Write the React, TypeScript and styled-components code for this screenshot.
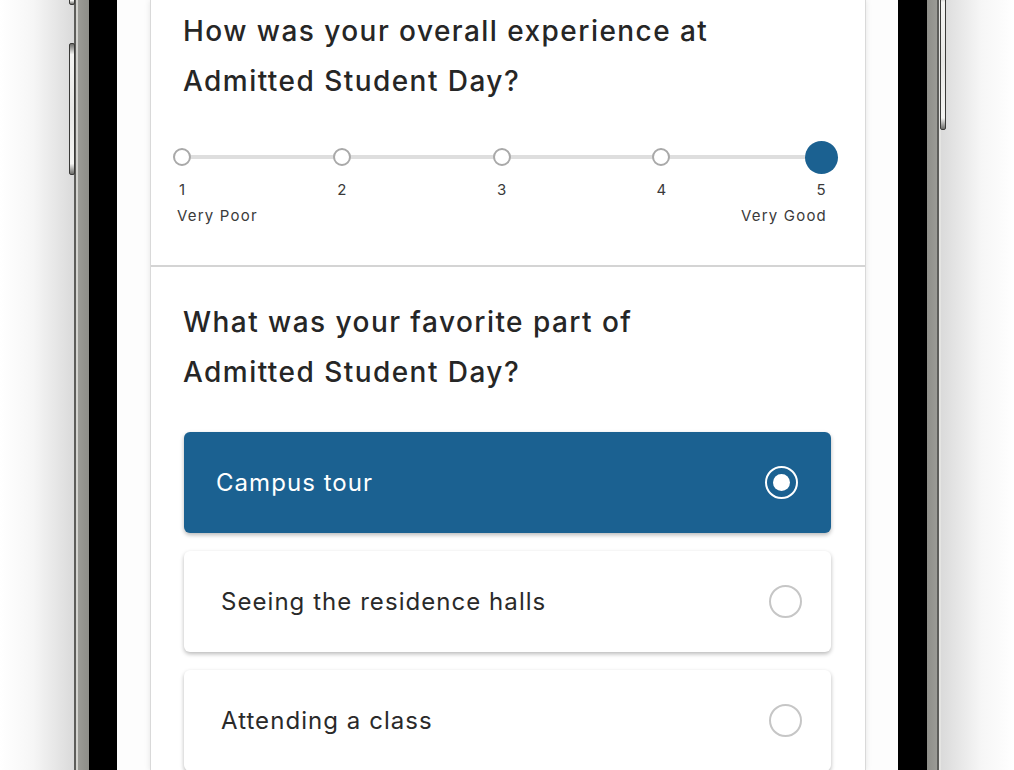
import React, { useState } from 'react';
import styled, { createGlobalStyle } from 'styled-components';

const GlobalStyle = createGlobalStyle`
  html, body {
    margin: 0;
    padding: 0;
    background: #fff;
  }
  body {
    font-family: Inter, 'Open Sans', sans-serif;
    overflow: hidden;
  }
`;

type TSide = {
  side: 'left' | 'right';
};

type TSelected = {
  selected: boolean;
};

type TStop = {
  active: boolean;
};

const BLUE = '#1b6191';

const Page = styled.div`
  display: flex;
  width: 1014px;
  height: 770px;
  overflow: hidden;
`;

const Shade = styled.div<TSide>`
  position: relative;
  width: ${props => (props.side === 'left' ? '74px' : 'auto')};
  flex: ${props => (props.side === 'left' ? '0 0 74px' : '1')};
  background: ${props =>
    props.side === 'left'
      ? 'linear-gradient(to right, #ffffff 0%, #f6f6f6 45%, #dadada 100%)'
      : 'linear-gradient(to left, #ffffff 0%, #f6f6f6 45%, #dadada 100%)'};
`;

const Rail = styled.div<TSide>`
  width: ${props => (props.side === 'left' ? '15px' : '14px')};
  background: ${props =>
    props.side === 'left'
      ? 'linear-gradient(to right, #5d5d5a 0, #5d5d5a 2px, #d2d2ce 2px, #d2d2ce 4px, #9b9b96 4px, #8e8e89 15px)'
      : 'linear-gradient(to left, #e4e4e2 0, #e4e4e2 2px, #5d5d5a 2px, #5d5d5a 4px, #9b9b96 4px, #8e8e89 14px)'};
`;

const Bezel = styled.div<TSide>`
  width: ${props => (props.side === 'left' ? '28px' : '29px')};
  background: #000;
`;

const SideButton = styled.div<{ top: number; height: number; side: 'left' | 'right' }>`
  position: absolute;
  top: ${props => props.top}px;
  ${props => (props.side === 'left' ? 'right: -1px;' : 'left: -1px;')}
  width: 6px;
  height: ${props => props.height}px;
  box-sizing: border-box;
  border: 1px solid #3a3a38;
  border-radius: 2px;
  background: linear-gradient(
    to bottom,
    #6b6b68 0%,
    #f4f4f2 8%,
    #e8e8e6 50%,
    #f4f4f2 92%,
    #6b6b68 100%
  );
`;

const Screen = styled.div`
  width: 781px;
  flex: 0 0 781px;
  box-sizing: border-box;
  padding: 0 32px 0 33px;
  background: #fdfdfd;
`;

const Card = styled.div`
  background: #fff;
  border-left: 1px solid #d9d9d9;
  border-right: 1px solid #d9d9d9;
  box-shadow: 0 0 6px rgba(0, 0, 0, 0.1);
  min-height: 770px;
`;

const Section = styled.section<{ divided?: boolean }>`
  padding: ${props => (props.divided ? '30px 33px 0 32px' : '6px 33px 39px 32px')};
  ${props => props.divided && 'border-top: 2px solid #d4d4d4;'}
`;

const Question = styled.h2`
  margin: 0;
  font-family: Inter, 'Open Sans', sans-serif;
  font-weight: 500;
  font-size: 28px;
  line-height: 50px;
  color: #262626;
  letter-spacing: 1.45px;
`;

const Track = styled.div`
  position: relative;
  display: flex;
  justify-content: space-between;
  margin: 35px 11px 0 -1px;
  &::before {
    content: '';
    position: absolute;
    left: 0;
    right: 0;
    top: 14px;
    height: 4px;
    background: #dedede;
  }
`;

const Stop = styled.div`
  position: relative;
  width: 0;
  display: flex;
  flex-direction: column;
  align-items: center;
`;

const KnobBox = styled.div`
  height: 32px;
  display: flex;
  align-items: center;
  justify-content: center;
`;

const Knob = styled.button<TStop>`
  box-sizing: border-box;
  flex: none;
  padding: 0;
  border-radius: 50%;
  cursor: pointer;
  width: ${props => (props.active ? '33px' : '18px')};
  height: ${props => (props.active ? '33px' : '18px')};
  border: ${props => (props.active ? 'none' : '2px solid #a9a9a9')};
  background: ${props => (props.active ? BLUE : '#fff')};
`;

const StopNumber = styled.span`
  margin-top: 8px;
  font-size: 15px;
  line-height: 18px;
  color: #3a3a3a;
`;

const Ends = styled.div`
  display: flex;
  justify-content: space-between;
  margin: 7px 5px 0 -6px;
  font-size: 15px;
  line-height: 20px;
  letter-spacing: 1.2px;
  color: #3a3a3a;
`;

const Options = styled.div`
  display: flex;
  flex-direction: column;
  gap: 18px;
  margin-top: 35px;
`;

const Option = styled.button<TSelected>`
  display: flex;
  align-items: center;
  justify-content: space-between;
  height: 101px;
  box-sizing: border-box;
  margin: 0 1px;
  padding: ${props => (props.selected ? '0 33px 0 32px' : '0 29px 0 37px')};
  border: none;
  border-radius: 6px;
  cursor: pointer;
  text-align: left;
  font-family: Inter, 'Open Sans', sans-serif;
  font-size: 24px;
  letter-spacing: 1.05px;
  color: ${props => (props.selected ? '#fff' : '#2a2a2a')};
  background: ${props => (props.selected ? BLUE : '#fff')};
  box-shadow: 0 2px 4px rgba(0, 0, 0, 0.28);
`;

const Radio = styled.span<TSelected>`
  box-sizing: border-box;
  display: flex;
  align-items: center;
  justify-content: center;
  width: 33px;
  height: 33px;
  border-radius: 50%;
  border: 2px solid ${props => (props.selected ? '#fff' : '#c6c6c6')};
  &::after {
    content: '';
    display: ${props => (props.selected ? 'block' : 'none')};
    width: 17px;
    height: 17px;
    border-radius: 50%;
    background: #fff;
  }
`;

const choices = ['Campus tour', 'Seeing the residence halls', 'Attending a class'];

function App() {
  const [rating, setRating] = useState<number>(5);
  const [choice, setChoice] = useState<number>(0);

  return (
    <Page>
      <GlobalStyle />
      <Shade side='left'>
        <SideButton side='left' top={-40} height={45} />
        <SideButton side='left' top={43} height={132} />
      </Shade>
      <Rail side='left' />
      <Bezel side='left' />
      <Screen>
        <Card>
          <Section>
            <Question>
              How was your overall experience at
              <br />
              Admitted Student Day?
            </Question>
            <Track>
              {[1, 2, 3, 4, 5].map(n => (
                <Stop key={n}>
                  <KnobBox>
                    <Knob
                      active={n === rating}
                      aria-label={`Rate ${n}`}
                      onClick={() => setRating(n)}
                    />
                  </KnobBox>
                  <StopNumber>{n}</StopNumber>
                </Stop>
              ))}
            </Track>
            <Ends>
              <span>Very Poor</span>
              <span>Very Good</span>
            </Ends>
          </Section>
          <Section divided>
            <Question>
              What was your favorite part of
              <br />
              Admitted Student Day?
            </Question>
            <Options>
              {choices.map((c, i) => (
                <Option
                  key={c}
                  selected={i === choice}
                  onClick={() => setChoice(i)}
                >
                  {c}
                  <Radio selected={i === choice} />
                </Option>
              ))}
            </Options>
          </Section>
        </Card>
      </Screen>
      <Bezel side='right' />
      <Rail side='right' />
      <Shade side='right'>
        <SideButton side='right' top={-10} height={140} />
      </Shade>
    </Page>
  );
}

export default App;
